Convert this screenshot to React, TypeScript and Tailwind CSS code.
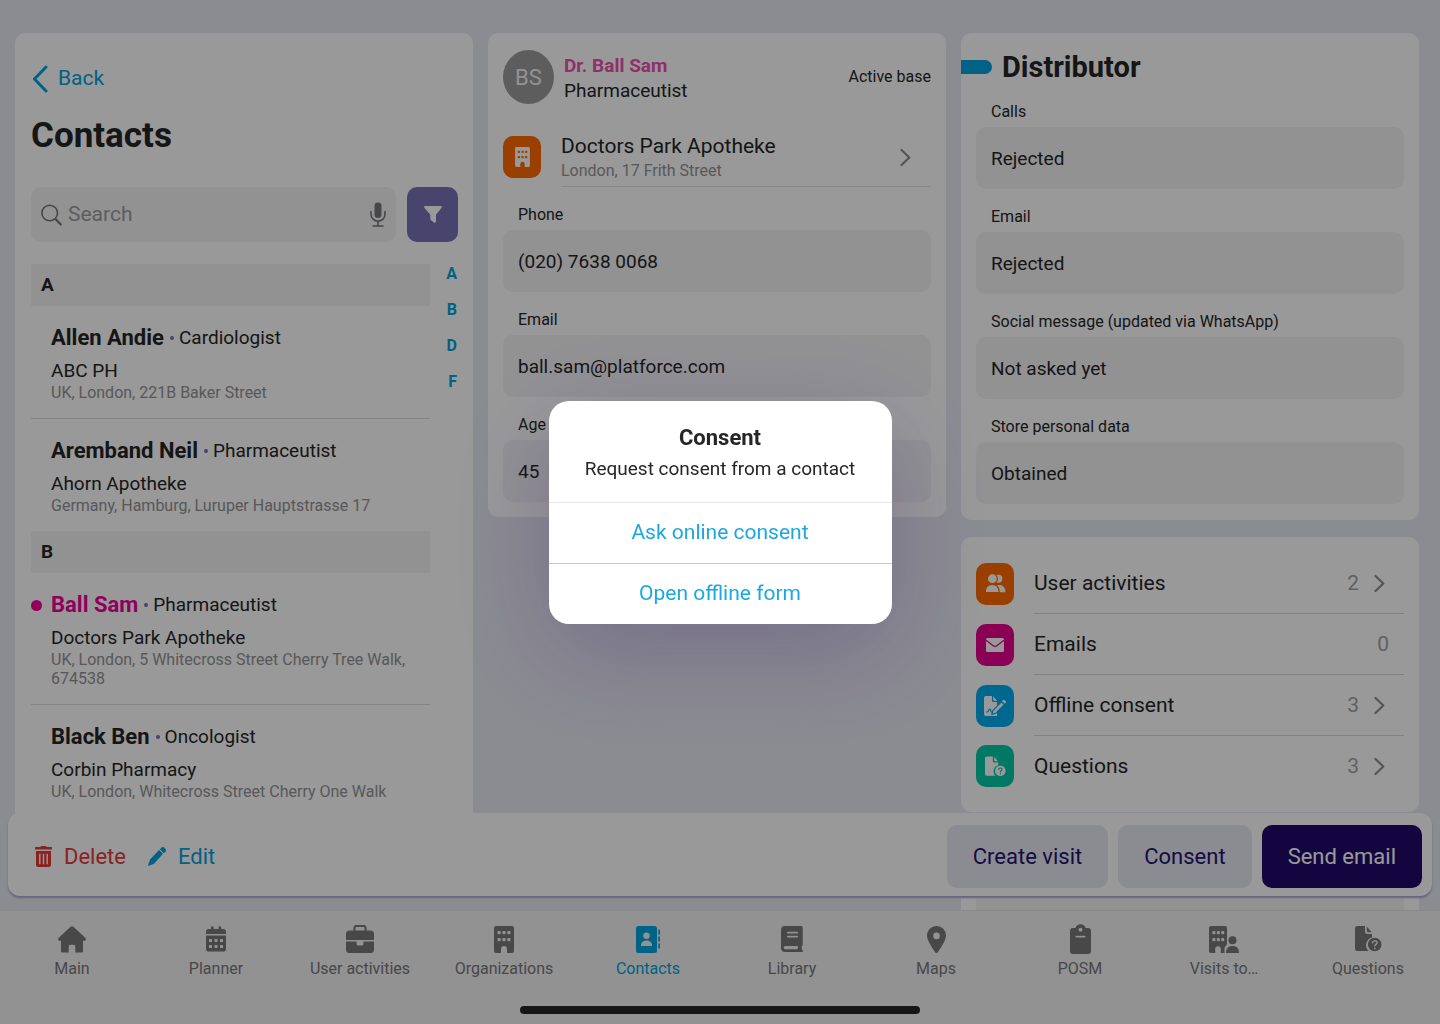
import React, { useState } from 'react';

interface IconProps {
    hole?: string;
    className?: string;
}

const HomeIcon = () => (
    <svg width="28" height="27" viewBox="0 0 28 27" fill="currentColor">
        <path d="M12.6.8a2.1 2.1 0 0 1 2.8 0l11.8 10.9c1.4 1.3.7 3.1-1 3.1H25V25a1.6 1.6 0 0 1-1.6 1.6h-6.1v-6a1.8 1.8 0 0 0-1.8-1.8h-3a1.8 1.8 0 0 0-1.8 1.8v6H4.600A1.600 1.600 0 0 1 3 25V14.800H1.800c-1.700 0-2.400-1.800-1-3.100z" />
    </svg>
);

const PlannerIcon = ({ hole = '#f3f3f4' }: IconProps) => (
    <svg width="20" height="26" viewBox="0 0 20 26" fill="currentColor">
        <path d="M5 1.500a1.300 1.300 0 0 1 2.600 0V3h5V1.500a1.300 1.300 0 0 1 2.600 0V3H17.500A2.500 2.500 0 0 1 20 5.500V8H0V5.500A2.500 2.500 0 0 1 2.500 3H5z" />
        <path d="M0 9.500h20v14a2 2 0 0 1-2 2H2a2 2 0 0 1-2-2z" />
        <g fill={hole}>
            <rect x="3" y="13" width="3" height="3" rx=".6" />
            <rect x="8.500" y="13" width="3" height="3" rx=".6" />
            <rect x="14" y="13" width="3" height="3" rx=".6" />
            <rect x="3" y="19" width="3" height="3" rx=".6" />
            <rect x="8.500" y="19" width="3" height="3" rx=".6" />
            <rect x="14" y="19" width="3" height="3" rx=".6" />
        </g>
    </svg>
);

const BriefcaseIcon = () => (
    <svg width="28" height="28" viewBox="0 0 28 28" fill="currentColor">
        <path d="M8.500 7V3a2 2 0 0 1 2-2h7a2 2 0 0 1 2 2v4" fill="none" stroke="currentColor" strokeWidth="2" />
        <path d="M3.500 5.500h21A3.500 3.500 0 0 1 28 9v6H0V9a3.500 3.500 0 0 1 3.500-3.500z" />
        <path d="M0 16.500h10.500v2.300a1.700 1.700 0 0 0 1.700 1.700h3.600a1.700 1.700 0 0 0 1.700-1.700v-2.300H28v8a3.500 3.500 0 0 1-3.500 3.500h-21A3.500 3.500 0 0 1 0 24.500z" />
    </svg>
);

const BuildingIcon = ({ hole = '#f3f3f4', className = 'h-[27px] w-5' }: IconProps) => (
    <svg className={className} viewBox="0 0 20 27" fill="currentColor">
        <path d="M2 0h16a2 2 0 0 1 2 2v23a2 2 0 0 1-2 2h-5v-4a3 3 0 0 0-6 0v4H2a2 2 0 0 1-2-2V2a2 2 0 0 1 2-2z" />
        <g fill={hole}>
            <rect x="3.500" y="5" width="3.200" height="3.200" rx="1" />
            <rect x="8.400" y="5" width="3.200" height="3.200" rx="1" />
            <rect x="13.300" y="5" width="3.200" height="3.200" rx="1" />
            <rect x="3.500" y="12" width="3.200" height="3.200" rx="1" />
            <rect x="8.400" y="12" width="3.200" height="3.200" rx="1" />
            <rect x="13.300" y="12" width="3.200" height="3.200" rx="1" />
        </g>
    </svg>
);

const ContactsIcon = ({ hole = '#f3f3f4' }: IconProps) => (
    <svg width="25" height="27" viewBox="0 0 25 27" fill="currentColor">
        <rect width="21" height="27" rx="2.500" />
        <g fill={hole}>
            <circle cx="10.500" cy="9.800" r="3.200" />
            <path d="M5 20v-.8c0-2.800 2.500-4.600 5.500-4.600s5.500 1.800 5.500 4.600v.8z" />
        </g>
        <path d="M22.300 3.500h.7a1 1 0 0 1 1 1v4h-1.700zM22.300 10.500H24v5h-1.700zM22.300 17.500H24v4a1 1 0 0 1-1 1h-.7z" />
    </svg>
);

const LibraryIcon = ({ hole = '#f3f3f4' }: IconProps) => (
    <svg width="22" height="26" viewBox="0 0 22 26" fill="currentColor">
        <path d="M4 0h16a1.700 1.700 0 0 1 1.700 1.700v17.500l-.9 1v3.600a1.100 1.100 0 0 1 0 2.200H4a4 4 0 0 1-4-4V4a4 4 0 0 1 4-4z" />
        <g fill={hole}>
            <rect x="6" y="5.700" width="11" height="1.700" rx=".6" />
            <rect x="6" y="9.700" width="11" height="1.700" rx=".6" />
            <path d="M4.300 20h12.500v3.200H4.300a1.600 1.600 0 0 1 0-3.200z" />
        </g>
    </svg>
);

const PinIcon = () => (
    <svg width="19" height="27" viewBox="0 0 19 27" fill="currentColor" fillRule="evenodd">
        <path d="M9.500 0A9.400 9.400 0 0 1 19 9.500c0 4.500-5.200 12.400-8.300 16.900a1.500 1.500 0 0 1-2.400 0C5.200 21.900 0 14 0 9.500A9.400 9.400 0 0 1 9.500 0zm0 6.600a3.300 3.300 0 1 0 0 6.600 3.300 3.300 0 0 0 0-6.600z" />
    </svg>
);

const ClipboardIcon = ({ hole = '#f3f3f4' }: IconProps) => (
    <svg width="21" height="30" viewBox="0 0 21 30" fill="currentColor">
        <path d="M3 4h2.500a5.200 5.200 0 0 1 10 0H18a3 3 0 0 1 3 3v20a3 3 0 0 1-3 3H3a3 3 0 0 1-3-3V7a3 3 0 0 1 3-3z" />
        <circle cx="10.500" cy="5.700" r="2" fill={hole} />
        <rect x="5.500" y="11.800" width="10" height="1.700" rx=".8" fill={hole} />
    </svg>
);

const VisitsIcon = ({ hole = '#f3f3f4' }: IconProps) => (
    <svg width="30" height="27" viewBox="0 0 30 27" fill="currentColor">
        <path d="M2 0h14a2 2 0 0 1 2 2v16.500a6 6 0 0 0-2.500 5V27h-3.700v-4a2.800 2.800 0 0 0-5.600 0v4H2a2 2 0 0 1-2-2V2a2 2 0 0 1 2-2z" />
        <g fill={hole}>
            <rect x="3.400" y="5" width="3" height="3.200" rx=".8" />
            <rect x="7.800" y="5" width="3" height="3.200" rx=".8" />
            <rect x="12.200" y="5" width="3" height="3.200" rx=".8" />
            <rect x="3.400" y="12" width="3" height="3.200" rx=".8" />
            <rect x="7.800" y="12" width="3" height="3.200" rx=".8" />
            <rect x="12.200" y="12" width="3" height="3.200" rx=".8" />
        </g>
        <circle cx="23.500" cy="14.200" r="4" />
        <path d="M17 27c0-4.500 2.400-7 6.600-7s6.400 2.500 6.400 7z" />
    </svg>
);

const QuestionsIcon = ({ hole = '#f3f3f4', className = 'h-[26px] w-[27px]' }: IconProps) => (
    <svg className={className} viewBox="0 0 27 26" fill="currentColor">
        <path d="M2.500 0H10v5.500A2.500 2.500 0 0 0 12.500 8H17v3.500A8 8 0 0 0 13.500 25H2.500A2.500 2.500 0 0 1 0 22.500v-20A2.500 2.500 0 0 1 2.500 0z" />
        <path d="M11.800.500 16.600 6.200h-3.300A1.500 1.500 0 0 1 11.800 4.700z" />
        <circle cx="19.700" cy="18.500" r="6.800" />
        <path
            d="M17.600 16.900c.2-2.900 4.600-2.600 4.400 0-.1 1.400-2.100 1.500-2.200 3.100"
            fill="none"
            stroke={hole}
            strokeWidth="1.400"
            strokeLinecap="round"
        />
        <circle cx="19.800" cy="22.300" r=".9" fill={hole} />
    </svg>
);

const UsersIcon = ({ hole = '#ff6b00' }: IconProps) => (
    <svg width="21" height="19" viewBox="0 0 21 19" fill="currentColor">
        <circle cx="13.300" cy="4.700" r="4" />
        <path d="M9 18.300v-1c0-4.200 2-6.300 5.300-6.300 3.700 0 6.200 2.600 6.200 7.300z" />
        <path d="M.2 18.500C.2 13 3 10.300 7.200 10.300s7 2.700 7 8.200z" stroke={hole} strokeWidth="1.200" />
        <circle cx="7.400" cy="4.700" r="5" stroke={hole} strokeWidth="1.200" />
    </svg>
);

const MailIcon = ({ hole = '#e6008c' }: IconProps) => (
    <svg width="18" height="14" viewBox="0 0 18 14" fill="currentColor">
        <rect width="18" height="14" rx="1.500" />
        <path d="M0 2.300l7.200 5.500a3 3 0 0 0 3.600 0L18 2.300" fill="none" stroke={hole} strokeWidth="1.300" />
    </svg>
);

const SignIcon = ({ hole = '#00aeef' }: IconProps) => (
    <svg width="22" height="20" viewBox="0 0 22 20" fill="currentColor">
        <path d="M2 0h6v4.500A1.500 1.500 0 0 0 9.500 6H13v14H2a2 2 0 0 1-2-2V2a2 2 0 0 1 2-2z" />
        <path d="M9.200.300l4 4.500h-3a1 1 0 0 1-1-1z" />
        <path d="M2.500 16.200c2-.3 2.400-3 3.500-3s.5 3 1.700 3 1-1.500 3-1.400" fill="none" stroke={hole} strokeWidth="1.200" />
        <path d="M8.800 14.700l8.600-8.900 2.900 2.800-8.700 8.700-3.700 1z" stroke={hole} strokeWidth="1.200" />
        <path d="M18 5.200l1-1a1.300 1.300 0 0 1 1.800 0l.8.8a1.300 1.300 0 0 1 0 1.800l-.9 1z" />
    </svg>
);

const SearchIcon = () => (
    <svg width="21" height="22" viewBox="0 0 21 22" fill="none" stroke="#77777a" strokeLinecap="round">
        <circle cx="8.700" cy="9" r="7.800" strokeWidth="1.600" />
        <path d="M14.500 15l5.300 5.500" strokeWidth="2.200" />
    </svg>
);

const MicIcon = () => (
    <svg width="16" height="25" viewBox="0 0 16 25" fill="none" stroke="#77777a" strokeWidth="1.600" strokeLinecap="round">
        <rect x="4.500" y=".500" width="7" height="15.500" rx="3.500" fill="#77777a" stroke="none" />
        <path d="M1 9.500v2.700a7 7 0 0 0 14 0V9.500M8 19.500v4.500M3 24h10" />
    </svg>
);

const FilterIcon = () => (
    <svg width="18" height="17" viewBox="0 0 18 17" fill="white">
        <path d="M1.200 0h15.600a1 1 0 0 1 .8 1.700L12 8.800v6.500c0 1.300-1.200 1.800-2.100 1.100L7 14.200c-.5-.4-.7-.8-.7-1.400v-4L.4 1.700A1 1 0 0 1 1.200 0z" />
    </svg>
);

const TrashIcon = () => (
    <svg width="17" height="21" viewBox="0 0 17 21" fill="currentColor" fillRule="evenodd">
        <path d="M5.500 1a1 1 0 0 1 1-1h4a1 1 0 0 1 1 1H16a1 1 0 0 1 0 2.600H1A1 1 0 0 1 1 1z" />
        <path d="M1 5h15v13.500a2.500 2.500 0 0 1-2.500 2.500h-10A2.500 2.500 0 0 1 1 18.500zm3.100 2.800v10.400h1.400V7.800zm3.700 0v10.400h1.400V7.800zm3.700 0v10.400h1.400V7.800z" />
    </svg>
);

const PencilIcon = () => (
    <svg width="18" height="19" viewBox="0 0 18 19" fill="currentColor">
        <path d="M11.100 3l3.900 3.800L6 16.800.900 18.800c-.6.200-1-.2-.8-.8l2-5.600z" />
        <path d="M11.900 2.200l1.300-1.400a2.400 2.400 0 0 1 3.300 0l.7.8a2.400 2.400 0 0 1 0 3.400l-1.400 1.200z" />
    </svg>
);

const Chevron = () => (
    <svg width="11" height="19" viewBox="0 0 11 19" fill="none" stroke="#8e8e91" strokeWidth="2.200" strokeLinecap="round" strokeLinejoin="round">
        <path d="M1.500 2l7.800 7.500-7.800 7.500" />
    </svg>
);

const contactGroups = [
    {
        letter: 'A',
        contacts: [
            { name: 'Allen Andie', role: 'Cardiologist', org: 'ABC PH', address: 'UK, London, 221B Baker Street' },
            { name: 'Aremband Neil', role: 'Pharmaceutist', org: 'Ahorn Apotheke', address: 'Germany, Hamburg, Luruper Hauptstrasse 17' },
        ],
    },
    {
        letter: 'B',
        contacts: [
            { name: 'Ball Sam', role: 'Pharmaceutist', org: 'Doctors Park Apotheke', address: 'UK, London, 5 Whitecross Street Cherry Tree Walk, 674538' },
            { name: 'Black Ben', role: 'Oncologist', org: 'Corbin Pharmacy', address: 'UK, London, Whitecross Street Cherry One Walk' },
        ],
    },
];

const contactFields = [
    { id: 'phone', label: 'Phone', value: '(020) 7638 0068' },
    { id: 'email', label: 'Email', value: 'ball.sam@platforce.com' },
    { id: 'age', label: 'Age', value: '45' },
];

const distributorFields = [
    { id: 'consent-calls', label: 'Calls', value: 'Rejected' },
    { id: 'consent-email', label: 'Email', value: 'Rejected' },
    { id: 'consent-social', label: 'Social message (updated via WhatsApp)', value: 'Not asked yet' },
    { id: 'consent-data', label: 'Store personal data', value: 'Obtained' },
];

const sections = [
    { label: 'User activities', count: 2, color: 'bg-[#ff6b00]', icon: <UsersIcon />, link: true },
    { label: 'Emails', count: 0, color: 'bg-[#e6008c]', icon: <MailIcon />, link: false },
    { label: 'Offline consent', count: 3, color: 'bg-[#00aeef]', icon: <SignIcon />, link: true },
    { label: 'Questions', count: 3, color: 'bg-[#00c8a5]', icon: <QuestionsIcon hole="#00c8a5" className="h-[21px] w-[21px]" />, link: true },
];

const tabs = [
    { label: 'Main', icon: <HomeIcon /> },
    { label: 'Planner', icon: <PlannerIcon /> },
    { label: 'User activities', icon: <BriefcaseIcon /> },
    { label: 'Organizations', icon: <BuildingIcon /> },
    { label: 'Contacts', icon: <ContactsIcon /> },
    { label: 'Library', icon: <LibraryIcon /> },
    { label: 'Maps', icon: <PinIcon /> },
    { label: 'POSM', icon: <ClipboardIcon /> },
    { label: 'Visits to…', icon: <VisitsIcon /> },
    { label: 'Questions', icon: <QuestionsIcon /> },
];

function Field({ id, label, value }: { id: string; label: string; value: string }) {
    return (
        <div className="pt-[18px]">
            <label htmlFor={id} className="block px-[15px] text-base leading-5">{label}</label>
            <input
                id={id}
                type="text"
                defaultValue={value}
                className="mt-[5px] block h-[62px] w-full rounded-[10px] bg-[#f3f3f6] px-[15px] text-[19px] outline-none"
            />
        </div>
    );
}

function ContactList({ selected, onSelect }: { selected: string; onSelect: (name: string) => void }) {
    return (
        <section className="rounded-[10px] bg-white pt-8 pr-[15px] pb-3 pl-4">
            <button className="flex h-7 items-center gap-[10px] text-[21px] text-[#00a3dc]">
                <svg width="17" height="28" viewBox="0 0 17 28" fill="none" stroke="currentColor" strokeWidth="3" strokeLinecap="round" strokeLinejoin="round">
                    <path d="M15 2L3.500 14 15 26" />
                </svg>
                Back
            </button>
            <h1 className="mt-[23px] text-[35px] leading-10 font-bold">Contacts</h1>
            <div className="mt-[31px] flex gap-[11px]">
                <div className="flex h-[55px] min-w-0 flex-1 items-center gap-[6px] rounded-[10px] bg-[#f3f3f4] px-[10px]">
                    <SearchIcon />
                    <input
                        type="search"
                        aria-label="Search"
                        placeholder="Search"
                        className="min-w-0 flex-1 bg-transparent text-[21px] outline-none placeholder:text-[#9b9b9e]"
                    />
                    <button aria-label="Voice search"><MicIcon /></button>
                </div>
                <button aria-label="Filter" className="flex h-[55px] w-[51px] items-center justify-center rounded-[10px] bg-[#7872b8]">
                    <FilterIcon />
                </button>
            </div>
            <div className="mt-[22px] flex">
                <div className="min-w-0 flex-1">
                    {contactGroups.map(group => (
                        <div key={group.letter}>
                            <h2 className="bg-[#f3f3f4] px-[10px] text-[19px] leading-[42px] font-bold">{group.letter}</h2>
                            <ul className="divide-y divide-[#dcdcde]">
                                {group.contacts.map(contact => {
                                    const active = contact.name === selected;
                                    return (
                                        <li key={contact.name}>
                                            <a href="#contact" onClick={() => onSelect(contact.name)} className="flex pt-[18px] pb-4">
                                                <span className="flex h-7 w-5 shrink-0 items-center">
                                                    {active && <span className="size-[11px] rounded-full bg-[#f0009b]" />}
                                                </span>
                                                <span className="min-w-0">
                                                    <span className="flex items-center leading-7">
                                                        <span className={`text-[22px] font-bold ${active ? 'text-[#f0009b]' : ''}`}>{contact.name}</span>
                                                        <span className="mr-[5px] ml-[6px] size-1 rounded-full bg-[#7872b8]" />
                                                        <span className="text-[19px]">{contact.role}</span>
                                                    </span>
                                                    <span className="mt-2 block text-[19px] leading-[22px]">{contact.org}</span>
                                                    <span className="mt-px block text-base leading-[19px] text-[#939396]">{contact.address}</span>
                                                </span>
                                            </a>
                                        </li>
                                    );
                                })}
                            </ul>
                        </div>
                    ))}
                </div>
                <nav aria-label="Alphabet" className="flex w-7 flex-col items-end gap-4 pr-px text-base leading-5 font-bold text-[#00a3dc]">
                    {['A', 'B', 'D', 'F'].map(letter => (
                        <a key={letter} href="#list">{letter}</a>
                    ))}
                </nav>
            </div>
        </section>
    );
}

function ContactDetails() {
    return (
        <section className="rounded-[10px] bg-white px-[15px] pt-[17px] pb-[15px]">
            <div className="flex h-[54px] items-center">
                <div className="flex h-[54px] w-[51px] items-center justify-center rounded-[50%] bg-[#9b9b9b] text-[22px] text-[#f3f3f4]">BS</div>
                <div className="ml-[10px] flex-1 pt-px text-[19px] leading-[25px]">
                    <h2 className="font-bold text-[#f050b0]">Dr. Ball Sam</h2>
                    <p>Pharmaceutist</p>
                </div>
                <span className="text-base">Active base</span>
            </div>
            <a href="#organization" className="mt-[26px] flex items-center">
                <span className="mb-1 flex h-[42px] w-[38px] items-center justify-center rounded-[10px] bg-[#ff6b00] text-white">
                    <BuildingIcon hole="#ff6b00" className="h-5 w-[15px]" />
                </span>
                <span className="ml-5 flex flex-1 items-center justify-between border-b border-[#e2e2e4] pt-1 pr-5 pb-[5px]">
                    <span>
                        <span className="block text-[21px] leading-6">Doctors Park Apotheke</span>
                        <span className="mt-[3px] block text-base leading-5 text-[#939396]">London, 17 Frith Street</span>
                    </span>
                    <Chevron />
                </span>
            </a>
            {contactFields.map(field => <Field key={field.id} {...field} />)}
        </section>
    );
}

function ConsentDialog({ onClose }: { onClose: () => void }) {
    return (
        <div className="fixed inset-0 z-20 flex items-center justify-center bg-black/40">
            <div
                role="dialog"
                aria-modal="true"
                aria-labelledby="consent-title"
                className="w-[343px] overflow-hidden rounded-[20px] bg-white text-center shadow-[0_28px_100px_rgba(50,25,105,0.26)]"
            >
                <div className="px-4 pt-[23px] pb-[21px]">
                    <h2 id="consent-title" className="text-[22px] leading-7 font-bold">Consent</h2>
                    <p className="mt-[5px] text-[19px] leading-6">Request consent from a contact</p>
                </div>
                <button onClick={onClose} className="block h-[61px] w-full border-t border-[#e8e8ea] text-[21px] text-[#1ba8e0]">Ask online consent</button>
                <button onClick={onClose} className="block h-[61px] w-full border-t border-[#c8c8ca] text-[21px] text-[#1ba8e0]">Open offline form</button>
            </div>
        </div>
    );
}

export default function App() {
    const [selected, setSelected] = useState('Ball Sam');
    const [showConsent, setShowConsent] = useState(true);

    return (
        <div className="flex h-screen flex-col bg-[#e8e9f3] font-['Roboto',sans-serif] text-[#262626]">
            <main className="relative min-h-0 flex-1 overflow-hidden">
                <div className="grid grid-cols-3 items-start gap-[15px] pt-[33px] pr-[21px] pl-[15px]">
                    <ContactList selected={selected} onSelect={setSelected} />
                    <ContactDetails />

                    <div className="flex flex-col gap-[17px]">
                        <section className="rounded-[10px] bg-white pt-[17px] pb-4">
                            <div className="flex items-center gap-[10px]">
                                <span className="h-[14px] w-[31px] rounded-r-full bg-[#00a3dc]" />
                                <h2 className="text-[29px] leading-[34px] font-bold">Distributor</h2>
                            </div>
                            <div className="px-[15px]">
                                {distributorFields.map(field => <Field key={field.id} {...field} />)}
                            </div>
                        </section>

                        <section className="rounded-[10px] bg-white px-[15px] py-4">
                            {sections.map(section => (
                                <a key={section.label} href="#section" className="group flex items-center">
                                    <span className={`flex h-[42px] w-[38px] items-center justify-center rounded-[10px] text-white ${section.color}`}>
                                        {section.icon}
                                    </span>
                                    <span className="ml-5 flex h-[61px] flex-1 items-center border-b border-[#d8d8da] pr-[15px] text-[21px] group-last:h-[60px] group-last:border-b-0">
                                        <span className="flex-1 pt-px">{section.label}</span>
                                        <span className="pt-px text-[#a2a2a5]">{section.count}</span>
                                        {section.link && <span className="mr-1 ml-[15px]"><Chevron /></span>}
                                    </span>
                                </a>
                            ))}
                        </section>

                        <section className="rounded-t-[10px] bg-white p-[15px]">
                            <div className="h-24 rounded-[10px] bg-[#f3f3f6]" />
                        </section>
                    </div>
                </div>

                {/* Contact actions */}
                <div className="absolute inset-x-2 bottom-[14px] flex h-[83px] items-center rounded-xl bg-white pt-[3px] pr-[10px] pl-[27px] text-[22px] shadow-[0_2px_2px_#aaa8cc]">
                    <button className="flex items-center gap-3 text-[#e63a3a]"><TrashIcon />Delete</button>
                    <button className="ml-[22px] flex items-center gap-3 text-[#00a3dc]"><PencilIcon />Edit</button>
                    <div className="ml-auto flex gap-[10px] text-[#241370]">
                        <button className="h-[63px] rounded-[10px] bg-[#e8e9f3] px-[26px]">Create visit</button>
                        <button onClick={() => setShowConsent(true)} className="h-[63px] rounded-[10px] bg-[#e8e9f3] px-[26px]">Consent</button>
                        <button className="h-[63px] rounded-[10px] bg-[#210a6c] px-[26px] text-white">Send email</button>
                    </div>
                </div>
            </main>

            <nav className="border-t border-[#e4e4ea] bg-[#f3f3f4] pb-[10px]">
                <div className="grid grid-cols-10 pt-[13px]">
                    {tabs.map(tab => (
                        <a
                            key={tab.label}
                            href="#tab"
                            className={`flex flex-col items-center ${tab.label === 'Contacts' ? 'text-[#00a3dc]' : 'text-[#78787a]'}`}
                        >
                            <span className="flex h-[30px] items-center">{tab.icon}</span>
                            <span className="mt-[5px] text-base leading-5">{tab.label}</span>
                        </a>
                    ))}
                </div>
                <div className="mx-auto mt-[27px] h-2 w-[400px] rounded-full bg-[#262626]" />
            </nav>

            {showConsent && <ConsentDialog onClose={() => setShowConsent(false)} />}
        </div>
    );
}
